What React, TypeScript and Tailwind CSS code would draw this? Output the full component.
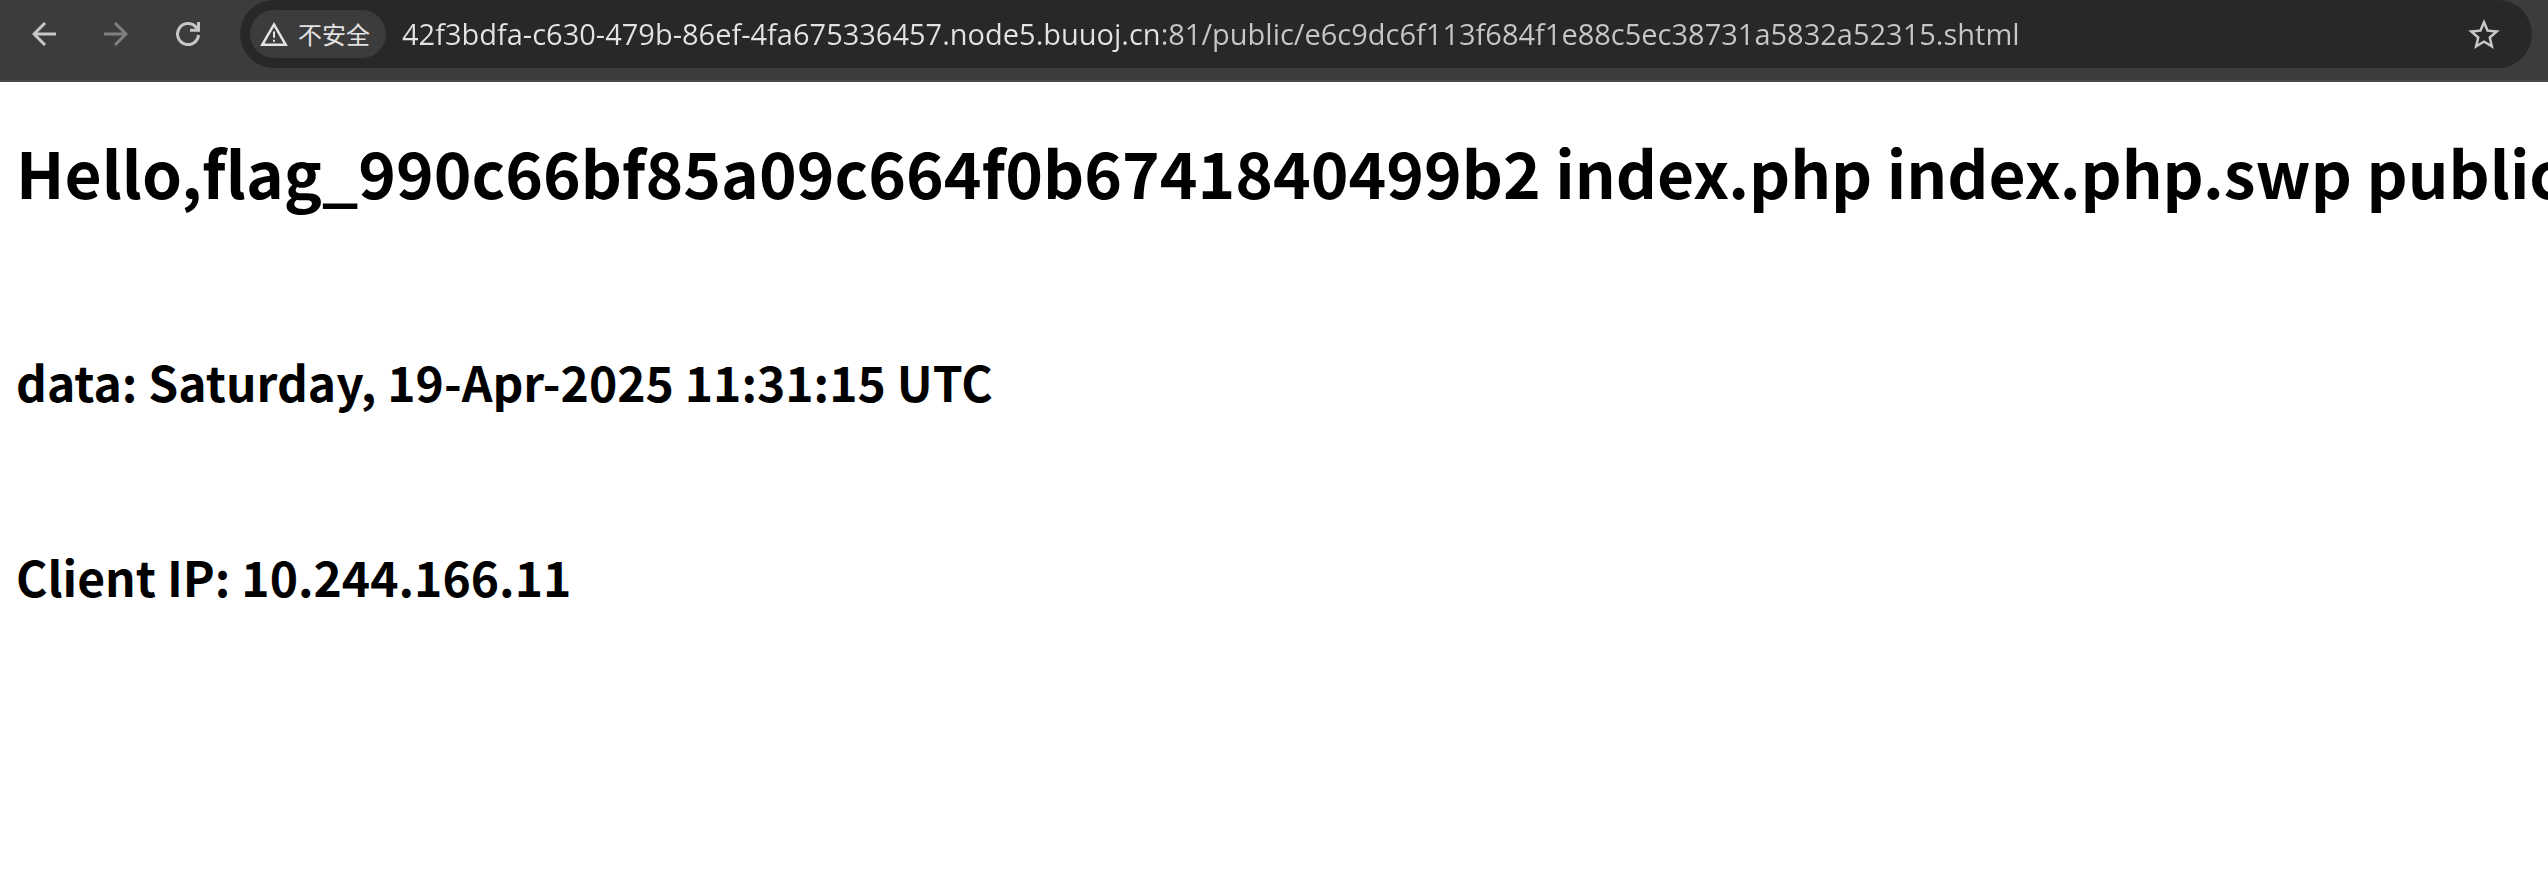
import React from "react";

const url =
  "42f3bdfa-c630-479b-86ef-4fa675336457.node5.buuoj.cn:81/public/e6c9dc6f113f684f1e88c5ec38731a5832a52315.shtml";

function BackIcon() {
  return (
    <svg viewBox="0 0 24 24" className="size-6" fill="none" stroke="currentColor" strokeWidth="3" aria-hidden="true">
      <path d="M24 12H3M13 1 2 12l11 11" />
    </svg>
  );
}

function ForwardIcon() {
  return (
    <svg viewBox="0 0 24 24" className="size-6" fill="none" stroke="currentColor" strokeWidth="3" aria-hidden="true">
      <path d="M0 12h21M11 1l11 11-11 11" />
    </svg>
  );
}

function ReloadIcon() {
  return (
    <svg viewBox="0 0 24 24" className="size-6" fill="none" stroke="currentColor" strokeWidth="3" aria-hidden="true">
      <path d="M22.5 13A10.5 10.5 0 1 1 20 5.2L22 8" />
      <path d="M22.5 0v8.3H14" />
    </svg>
  );
}

function WarningIcon() {
  return (
    <svg viewBox="1 2 22 19" className="h-6 w-7" fill="currentColor" aria-hidden="true">
      <path d="M12 5.99 19.53 19H4.47L12 5.99M12 2 1 21h22L12 2zm.8 14h-1.6v1.6h1.6V16zm0-6.4h-1.6v4.8h1.6V9.6z" />
    </svg>
  );
}

function StarIcon() {
  return (
    <svg viewBox="2 2 20 19" className="h-[30px] w-8" fill="currentColor" aria-hidden="true">
      <path d="M22 9.24l-7.19-.62L12 2 9.19 8.63 2 9.24l5.46 4.73L5.82 21 12 17.27 18.18 21l-1.63-7.03L22 9.24zM12 15.4l-3.76 2.27 1-4.28-3.32-2.88 4.38-.38L12 6.1l1.71 4.04 4.38.38-3.32 2.88 1 4.28L12 15.4z" />
    </svg>
  );
}

export default function App() {
  return (
    <div className="min-h-screen overflow-x-hidden bg-white">
      <header className="flex items-start border-b-2 border-[#4a4848] bg-[#3c3c3c] pr-4 pb-3">
        <nav className="flex h-[68px] w-60 items-center gap-12 pl-8 text-[#c7c7c7]">
          <button type="button" aria-label="Back">
            <BackIcon />
          </button>
          <button type="button" aria-label="Forward" disabled className="text-[#7f7f7f]">
            <ForwardIcon />
          </button>
          <button type="button" aria-label="Reload">
            <ReloadIcon />
          </button>
        </nav>
        <div className="flex h-[68px] flex-1 items-center rounded-full bg-[#282828] pr-8 pl-[10px]">
          <button
            type="button"
            className="flex h-12 shrink-0 items-center gap-[10px] rounded-full bg-[#3c3c3c] pr-4 pl-[10px] font-['Noto_Sans_CJK_SC',sans-serif] text-2xl text-[#e3e3e3]"
          >
            <WarningIcon />
            不安全
          </button>
          <input
            type="text"
            aria-label="Address"
            spellCheck={false}
            defaultValue={url}
            className="ml-4 h-12 min-w-0 flex-1 bg-linear-to-r from-[#e3e3e3] from-[760px] to-[#c7c7c7] to-[760px] bg-clip-text pb-[2px] font-['Open_Sans',sans-serif] text-[29px] text-transparent caret-white outline-none"
          />
          <button type="button" aria-label="Bookmark" className="text-[#c7c7c7]">
            <StarIcon />
          </button>
        </div>
      </header>
      <main className="px-4 font-['Noto_Sans_CJK_SC',sans-serif] font-bold text-black">
        <h1 className="mt-[43px] text-[64px] leading-[93px] whitespace-nowrap">
          Hello,flag_990c66bf85a09c664f0b6741840499b2 index.php index.php.swp public
        </h1>
        <h2 className="mt-32 text-5xl leading-[70px]">data: Saturday, 19-Apr-2025 11:31:15 UTC</h2>
        <h2 className="mt-[125px] text-5xl leading-[70px]">Client IP: 10.244.166.11</h2>
      </main>
    </div>
  );
}
